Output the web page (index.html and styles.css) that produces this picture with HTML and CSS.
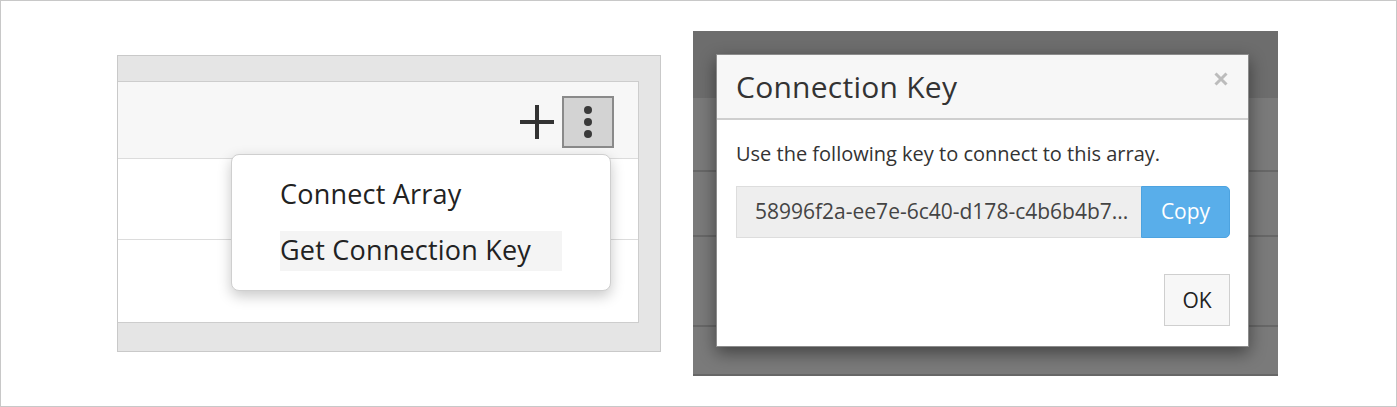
FILE: index.html
```html
<!DOCTYPE html>
<html lang="en">
<head>
    <meta charset="UTF-8">
    <meta name="viewport" content="width=device-width, initial-scale=1.0">
    <title>Connection Key</title>
    <link rel="stylesheet" href="styles.css">
</head>
<body>

    <div class="frame">

        <!-- left: array list with its actions menu open -->
        <div class="panel">
            <div class="card">
                <div class="card-head">
                    <span class="plus"></span>
                    <button class="more-btn">
                        <i></i><i></i><i></i>
                    </button>
                </div>
                <div class="card-row"></div>
                <div class="card-row last"></div>

                <div class="menu">
                    <div class="menu-item">Connect Array</div>
                    <div class="menu-item active">Get Connection Key</div>
                </div>
            </div>
        </div>

        <!-- right: the dialog shown after picking the item -->
        <div class="backdrop">
            <div class="bg-row top"></div>
            <div class="bg-row" style="height: 74px"></div>
            <div class="bg-row" style="height: 65px"></div>
            <div class="bg-row" style="height: 90px"></div>
            <div class="bg-row" style="height: 49px"></div>

            <div class="modal">
                <div class="modal-head">
                    <h2>Connection Key</h2>
                    <svg class="close" width="14" height="14" viewBox="0 0 14 14">
                        <path d="M1.5 1.5 L12.5 12.5 M12.5 1.5 L1.5 12.5" stroke="#bcbcbc" stroke-width="3"/>
                    </svg>
                </div>
                <div class="modal-body">
                    <p>Use the following key to connect to this array.</p>
                    <div class="key-group">
                        <div class="key-field">58996f2a-ee7e-6c40-d178-c4b6b4b7...</div>
                        <button class="copy-btn">Copy</button>
                    </div>
                </div>
                <div class="modal-foot">
                    <button class="ok-btn">OK</button>
                </div>
            </div>
        </div>

    </div>

</body>
</html>
```

FILE: styles.css
```css
body {
    margin: 0;
    background-color: #fff;
    font-family: "Open Sans", Lato, sans-serif;
    color: #333;
}

.frame {
    width: 1397px;
    height: 407px;
    box-sizing: border-box;
    border: 1px solid #c8c8c8;
    display: flex;
    align-items: flex-start;
    padding-left: 116px;
}

/* left panel */
.panel {
    width: 544px;
    height: 297px;
    box-sizing: border-box;
    margin-top: 54px;
    padding-top: 25px;
    padding-right: 21px;
    background-color: #e5e5e5;
    border: 1px solid #c9c9c9;
}

.card {
    position: relative;
    height: 242px;
    box-sizing: border-box;
    background-color: #fff;
    border: 1px solid #cdcdcd;
    border-left: none;
}

.card-head {
    height: 77px;
    box-sizing: border-box;
    background-color: #f7f7f7;
    border-bottom: 1px solid #dcdcdc;
    display: flex;
    align-items: flex-start;
    justify-content: flex-end;
    gap: 8px;
    padding: 14px 24px 0 0;
}

.card-row {
    height: 81px;
    box-sizing: border-box;
    border-bottom: 1px solid #dcdcdc;
}

.card-row.last {
    border-bottom: none;
}

.plus {
    position: relative;
    width: 34px;
    height: 34px;
    margin-top: 9px;
}

.plus::before,
.plus::after {
    content: "";
    position: absolute;
    background-color: #333;
}

.plus::before {
    left: 0;
    right: 0;
    top: 15px;
    height: 4px;
}

.plus::after {
    top: 0;
    bottom: 0;
    left: 15px;
    width: 4px;
}

.more-btn {
    width: 52px;
    height: 52px;
    padding: 0;
    background-color: #d3d3d3;
    border: 2px solid #8a8a8a;
    display: flex;
    flex-direction: column;
    align-items: center;
    justify-content: center;
    gap: 4px;
}

.more-btn i {
    width: 8px;
    height: 8px;
    border-radius: 50%;
    background-color: #3a3a3a;
}

.menu {
    position: absolute;
    left: 113px;
    top: 72px;
    width: 380px;
    height: 137px;
    box-sizing: border-box;
    padding: 20px 48px 0 48px;
    background-color: #fff;
    border: 1px solid #cfcfcf;
    border-radius: 8px;
    box-shadow: 0 5px 14px rgba(0, 0, 0, 0.22);
    display: flex;
    flex-direction: column;
    gap: 16px;
}

.menu-item {
    height: 40px;
    line-height: 38px;
    font-size: 27px;
    letter-spacing: 0.2px;
    color: #222;
}

.menu-item.active {
    background-color: #f4f4f4;
}

/* right panel */
.backdrop {
    position: relative;
    width: 585px;
    height: 345px;
    margin-top: 30px;
    margin-left: 32px;
    background-color: #7a7a7a;
    display: flex;
    flex-direction: column;
}

.bg-row {
    box-sizing: border-box;
    border-bottom: 2px solid #676767;
}

.bg-row.top {
    height: 67px;
    background-color: #6d6d6d;
    border-bottom: none;
}

.modal {
    position: absolute;
    left: 23px;
    top: 23px;
    width: 533px;
    height: 293px;
    box-sizing: border-box;
    background-color: #fff;
    border: 1px solid #8c8c8c;
    box-shadow: 0 6px 16px rgba(0, 0, 0, 0.45);
    display: flex;
    flex-direction: column;
}

.modal-head {
    height: 65px;
    box-sizing: border-box;
    background-color: #f7f7f7;
    border-bottom: 2px solid #cfcfcf;
    padding: 0 20px 0 19px;
    display: flex;
    align-items: center;
    justify-content: space-between;
}

.modal-head h2 {
    margin: 0;
    font-size: 30px;
    letter-spacing: 0.25px;
    font-weight: normal;
    color: #333;
}

.close {
    align-self: flex-start;
    margin-top: 17px;
}

.modal-body {
    padding: 20px 18px 0 19px;
}

.modal-body p {
    margin: 0 0 18px;
    font-size: 20px;
    line-height: 28px;
    color: #333;
}

.key-group {
    display: flex;
    height: 52px;
}

.key-field {
    flex: 1;
    box-sizing: border-box;
    padding-left: 18px;
    line-height: 48px;
    font-size: 21px;
    color: #444;
    background-color: #eee;
    border: 1px solid #ddd;
    border-right: none;
    white-space: nowrap;
    overflow: hidden;
}

.copy-btn {
    width: 89px;
    padding: 0 0 3px;
    font-family: inherit;
    font-size: 21px;
    color: #fff;
    background-color: #59aeea;
    border: 1px solid #4da3e0;
    border-radius: 0 5px 5px 0;
}

.modal-foot {
    display: flex;
    justify-content: flex-end;
    padding: 36px 18px 0 0;
}

.ok-btn {
    width: 66px;
    height: 52px;
    padding: 0;
    font-family: inherit;
    font-size: 21px;
    color: #222;
    background-color: #f7f7f7;
    border: 1px solid #cfcfcf;
}
```
